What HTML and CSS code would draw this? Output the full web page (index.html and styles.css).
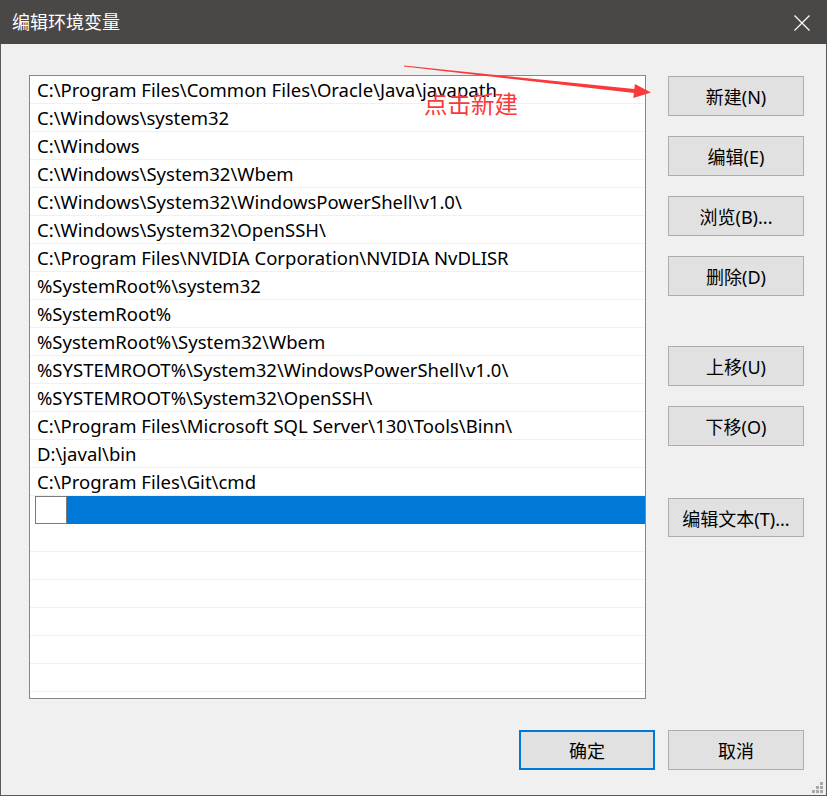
FILE: index.html
```html
<!DOCTYPE html>
<html lang="zh">

<head>
    <meta charset="UTF-8">
    <title>编辑环境变量</title>
    <link rel="stylesheet" href="styles.css">
</head>

<body>
    <div class="window">
        <div class="titlebar">
            <span class="title">编辑环境变量</span>
            <svg class="close" width="16" height="16" viewBox="0 0 16 16">
                <path d="M0.5 0.5 L15.5 15.5 M15.5 0.5 L0.5 15.5" stroke="#fff" stroke-width="1.2" fill="none" />
            </svg>
        </div>

        <div class="content">
            <div class="top">
                <div class="list">
                    <div class="row">C:\Program Files\Common Files\Oracle\Java\javapath</div>
                    <div class="row">C:\Windows\system32</div>
                    <div class="row">C:\Windows</div>
                    <div class="row">C:\Windows\System32\Wbem</div>
                    <div class="row">C:\Windows\System32\WindowsPowerShell\v1.0\</div>
                    <div class="row">C:\Windows\System32\OpenSSH\</div>
                    <div class="row">C:\Program Files\NVIDIA Corporation\NVIDIA NvDLISR</div>
                    <div class="row">%SystemRoot%\system32</div>
                    <div class="row">%SystemRoot%</div>
                    <div class="row">%SystemRoot%\System32\Wbem</div>
                    <div class="row">%SYSTEMROOT%\System32\WindowsPowerShell\v1.0\</div>
                    <div class="row">%SYSTEMROOT%\System32\OpenSSH\</div>
                    <div class="row">C:\Program Files\Microsoft SQL Server\130\Tools\Binn\</div>
                    <div class="row">D:\javal\bin</div>
                    <div class="row">C:\Program Files\Git\cmd</div>
                    <div class="row selected">
                        <span class="edit-box"></span>
                        <span class="highlight"></span>
                    </div>
                    <div class="row"></div>
                    <div class="row"></div>
                    <div class="row"></div>
                    <div class="row"></div>
                    <div class="row"></div>
                    <div class="row"></div>
                    <div class="row"></div>
                </div>

                <div class="side-buttons">
                    <button class="btn">新建(N)</button>
                    <button class="btn">编辑(E)</button>
                    <button class="btn">浏览(B)...</button>
                    <button class="btn">删除(D)</button>
                    <button class="btn btn-group">上移(U)</button>
                    <button class="btn">下移(O)</button>
                    <button class="btn btn-text">编辑文本(T)...</button>
                </div>
            </div>

            <div class="footer">
                <button class="btn btn-default">确定</button>
                <button class="btn">取消</button>
            </div>
        </div>

        <!-- 截图标注 -->
        <svg class="arrow" width="827" height="120" viewBox="0 0 827 120">
            <polygon fill="#fa3a3a"
                points="404,65.6 634.3,89.1 634.9,84.1 651,92.5 633.3,98 633.9,93 404,66.4" />
        </svg>
        <span class="note">点击新建</span>

        <div class="grip">
            <i style="grid-area: 1 / 3"></i>
            <i style="grid-area: 2 / 2"></i>
            <i style="grid-area: 2 / 3"></i>
            <i style="grid-area: 3 / 1"></i>
            <i style="grid-area: 3 / 2"></i>
            <i style="grid-area: 3 / 3"></i>
        </div>
    </div>
</body>

</html>
```

FILE: styles.css
```css
:root {
    --face: #f0f0f0;
    --title-bg: #4a4846;
    --btn-bg: #e1e1e1;
    --btn-border: #adadad;
    --accent: #0078d7;
    --note-red: #fa3a3a;
}

* {
    box-sizing: border-box;
    margin: 0;
    padding: 0;
}

body {
    font-family: "Noto Sans", "Noto Sans CJK SC", sans-serif;
    font-size: 18.5px;
    color: #000;
    background: var(--face);
}

.window {
    position: relative;
    width: 827px;
    height: 796px;
    background: var(--face);
    overflow: hidden;
}

.titlebar {
    height: 44px;
    background: var(--title-bg);
    color: #fff;
    display: flex;
    align-items: center;
    justify-content: space-between;
    padding: 0 17px 0 12px;
}

.title {
    font-family: "Noto Sans CJK SC", sans-serif;
    font-size: 18px;
    margin-top: -2px;
}

.close {
    display: block;
    margin-top: 1px;
}

.content {
    height: 752px;
    border: 1px solid #5a5a5a;
    border-top: none;
    padding: 31px 22px 0 28px;
}

.top {
    display: flex;
    gap: 22px;
}

.list {
    width: 617px;
    height: 624px;
    background: #fff;
    border: 1px solid #828790;
    overflow: hidden;
}

.row {
    height: 28px;
    line-height: 28px;
    padding-left: 7px;
    border-bottom: 1px solid #f0f0f0;
    white-space: nowrap;
}

.row.selected {
    display: flex;
    padding-left: 5px;
    border-bottom-color: #fff;
}

.edit-box {
    width: 32px;
    height: 28px;
    border: 1px solid #7a7a7a;
    background: #fff;
}

.highlight {
    flex: 1;
    height: 28px;
    background: var(--accent);
}

.side-buttons {
    display: flex;
    flex-direction: column;
    gap: 20px;
    padding-top: 1px;
}

.btn {
    width: 136px;
    height: 40px;
    background: var(--btn-bg);
    border: 1px solid var(--btn-border);
    font-family: "Noto Sans", "Noto Sans CJK SC", sans-serif;
    font-size: 18px;
    color: #000;
}

.btn-group {
    margin-top: 30px;
}

.btn-text {
    margin-top: 32px;
    height: 39px;
}

.btn-default {
    border: 2px solid var(--accent);
}

.footer {
    display: flex;
    justify-content: flex-end;
    gap: 13px;
    margin-top: 31px;
}

.arrow {
    position: absolute;
    left: 0;
    top: 0;
}

.note {
    position: absolute;
    left: 424px;
    top: 86px;
    font-family: "Noto Sans CJK SC", sans-serif;
    font-size: 23.5px;
    color: var(--note-red);
}

.grip {
    position: absolute;
    right: 4px;
    bottom: 3px;
    display: grid;
    grid-template-columns: repeat(3, 3px);
    grid-template-rows: repeat(3, 3px);
    gap: 1px;
}

.grip i {
    background: #a9a9a9;
}
```
